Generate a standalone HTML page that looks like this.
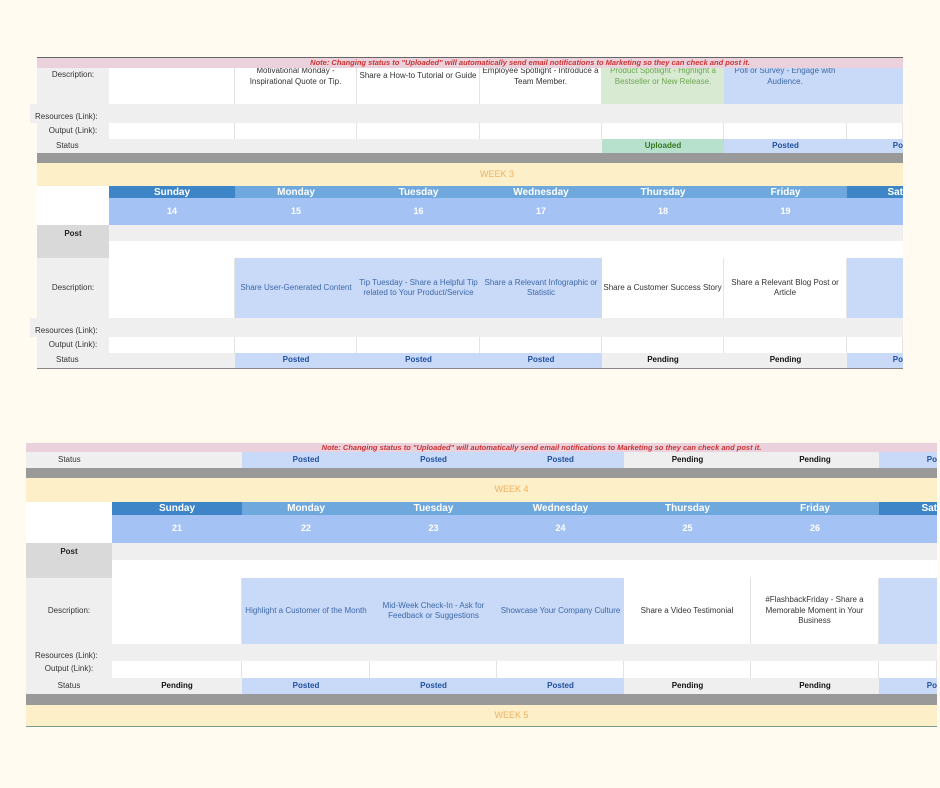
<!DOCTYPE html>
<html><head><meta charset="utf-8"><style>
body{margin:0;background:#fffbf1;width:940px;height:788px;position:relative;overflow:hidden;font-family:"Liberation Sans",Arial,sans-serif}
.c{position:absolute;display:flex;align-items:center;justify-content:center;text-align:center;font-size:8px;color:#333;box-sizing:border-box;line-height:1.3;overflow:hidden;white-space:normal}
.g{background:#efefef}.w{background:#fff;border-right:1px solid #e3e3e3}.b{background:#c9daf8;color:#3d68a8}.dg{background:#999}
.wk{background:#fdefc8;color:#f0b060;font-size:9px}
.dh{background:#6fa8dc;color:#fff;font-weight:bold;font-size:10px}.ds{background:#3d85c6}
.dt{background:#a4c2f4;color:#fff;font-weight:bold;font-size:9px}
.lb{background:#efefef;color:#333}.pl{background:#d9d9d9;font-weight:bold;color:#222;align-items:flex-start;padding-top:4px}
.note{background:#ead1dc;color:#cc3333;font-style:italic;font-weight:bold;font-size:7.5px}
.ps{font-weight:bold;color:#1f4e9c;background:#c9daf8}.pe{font-weight:bold;color:#111;background:#efefef}
</style></head><body>

<!-- PANEL 1 -->
<div class="c lb" style="left:37px;top:57px;width:72px;height:47px;align-items:flex-start;padding-top:13px">Description:</div>
<div class="c w" style="left:109px;top:57px;width:126px;height:47px"></div>
<div class="c w" style="left:235px;top:57px;width:122px;height:47px;padding-bottom:8px">Motivational Monday -<br>Inspirational Quote or Tip.</div>
<div class="c w" style="left:357px;top:57px;width:123px;height:47px;padding-bottom:8px">Share a How-to Tutorial or Guide</div>
<div class="c w" style="left:480px;top:57px;width:122px;height:47px;padding-bottom:8px">Employee Spotlight - Introduce a<br>Team Member.</div>
<div class="c" style="left:602px;top:57px;width:122px;height:47px;padding-bottom:8px;background:#d9ead3;color:#6aa84f">Product Spotlight - Highlight a<br>Bestseller or New Release.</div>
<div class="c b" style="left:724px;top:57px;width:179px;height:47px;padding-bottom:8px;padding-right:57px">Poll or Survey - Engage with<br>Audience.</div>
<div class="c note" style="left:37px;top:57px;width:866px;height:11px;padding-left:120px;border-top:1px solid #666">Note: Changing status to "Uploaded" will automatically send email notifications to Marketing so they can check and post it.</div>
<div class="c lb" style="left:30px;top:104px;width:873px;height:19px;justify-content:flex-start;padding-left:5px;align-items:flex-end;padding-bottom:1px">Resources (Link):</div>
<div class="c lb" style="left:37px;top:123px;width:72px;height:16px">Output (Link):</div>
<div class="c w" style="left:109px;top:123px;width:126px;height:16px"></div>
<div class="c w" style="left:235px;top:123px;width:122px;height:16px"></div>
<div class="c w" style="left:357px;top:123px;width:123px;height:16px"></div>
<div class="c w" style="left:480px;top:123px;width:122px;height:16px"></div>
<div class="c w" style="left:602px;top:123px;width:122px;height:16px"></div>
<div class="c w" style="left:724px;top:123px;width:123px;height:16px"></div>
<div class="c w" style="left:847px;top:123px;width:56px;height:16px"></div>
<div class="c lb" style="left:37px;top:139px;width:565px;height:14px;justify-content:flex-start;padding-left:19px">Status</div>
<div class="c" style="left:602px;top:139px;width:122px;height:14px;background:#b7e1cd;color:#38761d;font-weight:bold">Uploaded</div>
<div class="c ps" style="left:724px;top:139px;width:123px;height:14px">Posted</div>
<div class="c ps" style="left:847px;top:139px;width:56px;height:14px;justify-content:flex-end">Po</div>
<div class="c dg" style="left:37px;top:153px;width:866px;height:10px"></div>
<div class="c wk" style="left:37px;top:163px;width:866px;height:23px;padding-left:54px">WEEK 3</div>
<div class="c" style="left:37px;top:186px;width:72px;height:39px;background:#fff"></div>
<div class="c dh ds" style="left:109px;top:186px;width:126px;height:12px">Sunday</div>
<div class="c dh" style="left:235px;top:186px;width:122px;height:12px">Monday</div>
<div class="c dh" style="left:357px;top:186px;width:123px;height:12px">Tuesday</div>
<div class="c dh" style="left:480px;top:186px;width:122px;height:12px">Wednesday</div>
<div class="c dh" style="left:602px;top:186px;width:122px;height:12px">Thursday</div>
<div class="c dh" style="left:724px;top:186px;width:123px;height:12px">Friday</div>
<div class="c dh ds" style="left:847px;top:186px;width:56px;height:12px;justify-content:flex-end">Sat</div>
<div class="c dt" style="left:109px;top:198px;width:126px;height:27px">14</div>
<div class="c dt" style="left:235px;top:198px;width:122px;height:27px">15</div>
<div class="c dt" style="left:357px;top:198px;width:123px;height:27px">16</div>
<div class="c dt" style="left:480px;top:198px;width:122px;height:27px">17</div>
<div class="c dt" style="left:602px;top:198px;width:122px;height:27px">18</div>
<div class="c dt" style="left:724px;top:198px;width:123px;height:27px">19</div>
<div class="c dt" style="left:847px;top:198px;width:56px;height:27px"></div>
<div class="c pl" style="left:37px;top:225px;width:72px;height:33px">Post</div>
<div class="c g" style="left:109px;top:225px;width:794px;height:16px"></div>
<div class="c" style="left:109px;top:241px;width:794px;height:17px;background:#fff"></div>
<div class="c lb" style="left:37px;top:258px;width:72px;height:60px">Description:</div>
<div class="c w" style="left:109px;top:258px;width:126px;height:60px"></div>
<div class="c b" style="left:235px;top:258px;width:122px;height:60px">Share User-Generated Content</div>
<div class="c b" style="left:357px;top:258px;width:123px;height:60px">Tip Tuesday - Share a Helpful Tip<br>related to Your Product/Service</div>
<div class="c b" style="left:480px;top:258px;width:122px;height:60px">Share a Relevant Infographic or<br>Statistic</div>
<div class="c w" style="left:602px;top:258px;width:122px;height:60px">Share a Customer Success Story</div>
<div class="c w" style="left:724px;top:258px;width:123px;height:60px">Share a Relevant Blog Post or<br>Article</div>
<div class="c b" style="left:847px;top:258px;width:56px;height:60px"></div>
<div class="c lb" style="left:30px;top:318px;width:873px;height:19px;justify-content:flex-start;padding-left:5px;align-items:flex-end;padding-bottom:1px">Resources (Link):</div>
<div class="c lb" style="left:37px;top:337px;width:72px;height:16px">Output (Link):</div>
<div class="c w" style="left:109px;top:337px;width:126px;height:16px"></div>
<div class="c w" style="left:235px;top:337px;width:122px;height:16px"></div>
<div class="c w" style="left:357px;top:337px;width:123px;height:16px"></div>
<div class="c w" style="left:480px;top:337px;width:122px;height:16px"></div>
<div class="c w" style="left:602px;top:337px;width:122px;height:16px"></div>
<div class="c w" style="left:724px;top:337px;width:123px;height:16px"></div>
<div class="c w" style="left:847px;top:337px;width:56px;height:16px"></div>
<div class="c lb" style="left:37px;top:353px;width:198px;height:16px;justify-content:flex-start;padding-left:19px;border-bottom:1px solid #888">Status</div>
<div class="c ps" style="left:235px;top:353px;width:122px;height:16px;border-bottom:1px solid #888">Posted</div>
<div class="c ps" style="left:357px;top:353px;width:123px;height:16px;border-bottom:1px solid #888">Posted</div>
<div class="c ps" style="left:480px;top:353px;width:122px;height:16px;border-bottom:1px solid #888">Posted</div>
<div class="c pe" style="left:602px;top:353px;width:122px;height:16px;border-bottom:1px solid #888">Pending</div>
<div class="c pe" style="left:724px;top:353px;width:123px;height:16px;border-bottom:1px solid #888">Pending</div>
<div class="c ps" style="left:847px;top:353px;width:56px;height:16px;justify-content:flex-end;border-bottom:1px solid #888">Po</div>

<!-- PANEL 2 -->
<div class="c note" style="left:26px;top:443px;width:911px;height:9px;padding-left:120px">Note: Changing status to "Uploaded" will automatically send email notifications to Marketing so they can check and post it.</div>
<div class="c lb" style="left:26px;top:452px;width:216px;height:16px;justify-content:flex-start;padding-left:32px">Status</div>
<div class="c ps" style="left:242px;top:452px;width:128px;height:16px">Posted</div>
<div class="c ps" style="left:370px;top:452px;width:127px;height:16px">Posted</div>
<div class="c ps" style="left:497px;top:452px;width:127px;height:16px">Posted</div>
<div class="c pe" style="left:624px;top:452px;width:127px;height:16px">Pending</div>
<div class="c pe" style="left:751px;top:452px;width:128px;height:16px">Pending</div>
<div class="c ps" style="left:879px;top:452px;width:58px;height:16px;justify-content:flex-end">Po</div>
<div class="c dg" style="left:26px;top:468px;width:911px;height:10px"></div>
<div class="c wk" style="left:26px;top:478px;width:911px;height:24px;padding-left:60px">WEEK 4</div>
<div class="c" style="left:26px;top:502px;width:86px;height:41px;background:#fff"></div>
<div class="c dh ds" style="left:112px;top:502px;width:130px;height:13px">Sunday</div>
<div class="c dh" style="left:242px;top:502px;width:128px;height:13px">Monday</div>
<div class="c dh" style="left:370px;top:502px;width:127px;height:13px">Tuesday</div>
<div class="c dh" style="left:497px;top:502px;width:127px;height:13px">Wednesday</div>
<div class="c dh" style="left:624px;top:502px;width:127px;height:13px">Thursday</div>
<div class="c dh" style="left:751px;top:502px;width:128px;height:13px">Friday</div>
<div class="c dh ds" style="left:879px;top:502px;width:58px;height:13px;justify-content:flex-end">Sat</div>
<div class="c dt" style="left:112px;top:515px;width:130px;height:28px">21</div>
<div class="c dt" style="left:242px;top:515px;width:128px;height:28px">22</div>
<div class="c dt" style="left:370px;top:515px;width:127px;height:28px">23</div>
<div class="c dt" style="left:497px;top:515px;width:127px;height:28px">24</div>
<div class="c dt" style="left:624px;top:515px;width:127px;height:28px">25</div>
<div class="c dt" style="left:751px;top:515px;width:128px;height:28px">26</div>
<div class="c dt" style="left:879px;top:515px;width:58px;height:28px"></div>
<div class="c pl" style="left:26px;top:543px;width:86px;height:35px">Post</div>
<div class="c g" style="left:112px;top:543px;width:825px;height:17px"></div>
<div class="c" style="left:112px;top:560px;width:825px;height:18px;background:#fff"></div>
<div class="c lb" style="left:26px;top:578px;width:86px;height:66px">Description:</div>
<div class="c w" style="left:112px;top:578px;width:130px;height:66px"></div>
<div class="c b" style="left:242px;top:578px;width:128px;height:66px">Highlight a Customer of the Month</div>
<div class="c b" style="left:370px;top:578px;width:127px;height:66px">Mid-Week Check-In - Ask for<br>Feedback or Suggestions</div>
<div class="c b" style="left:497px;top:578px;width:127px;height:66px">Showcase Your Company Culture</div>
<div class="c w" style="left:624px;top:578px;width:127px;height:66px">Share a Video Testimonial</div>
<div class="c w" style="left:751px;top:578px;width:128px;height:66px">#FlashbackFriday - Share a<br>Memorable Moment in Your<br>Business</div>
<div class="c b" style="left:879px;top:578px;width:58px;height:66px"></div>
<div class="c lb" style="left:26px;top:644px;width:911px;height:17px;justify-content:flex-start;padding-left:9px;align-items:flex-end;padding-bottom:0px">Resources (Link):</div>
<div class="c lb" style="left:26px;top:661px;width:86px;height:17px">Output (Link):</div>
<div class="c w" style="left:112px;top:661px;width:130px;height:17px"></div>
<div class="c w" style="left:242px;top:661px;width:128px;height:17px"></div>
<div class="c w" style="left:370px;top:661px;width:127px;height:17px"></div>
<div class="c w" style="left:497px;top:661px;width:127px;height:17px"></div>
<div class="c w" style="left:624px;top:661px;width:127px;height:17px"></div>
<div class="c w" style="left:751px;top:661px;width:128px;height:17px"></div>
<div class="c w" style="left:879px;top:661px;width:58px;height:17px"></div>
<div class="c lb" style="left:26px;top:678px;width:86px;height:16px">Status</div>
<div class="c pe" style="left:112px;top:678px;width:130px;height:16px">Pending</div>
<div class="c ps" style="left:242px;top:678px;width:128px;height:16px">Posted</div>
<div class="c ps" style="left:370px;top:678px;width:127px;height:16px">Posted</div>
<div class="c ps" style="left:497px;top:678px;width:127px;height:16px">Posted</div>
<div class="c pe" style="left:624px;top:678px;width:127px;height:16px">Pending</div>
<div class="c pe" style="left:751px;top:678px;width:128px;height:16px">Pending</div>
<div class="c ps" style="left:879px;top:678px;width:58px;height:16px;justify-content:flex-end">Po</div>
<div class="c dg" style="left:26px;top:694px;width:911px;height:11px"></div>
<div class="c wk" style="left:26px;top:705px;width:911px;height:22px;padding-left:60px;border-bottom:1px solid #7a9a8a">WEEK 5</div>
</body></html>
